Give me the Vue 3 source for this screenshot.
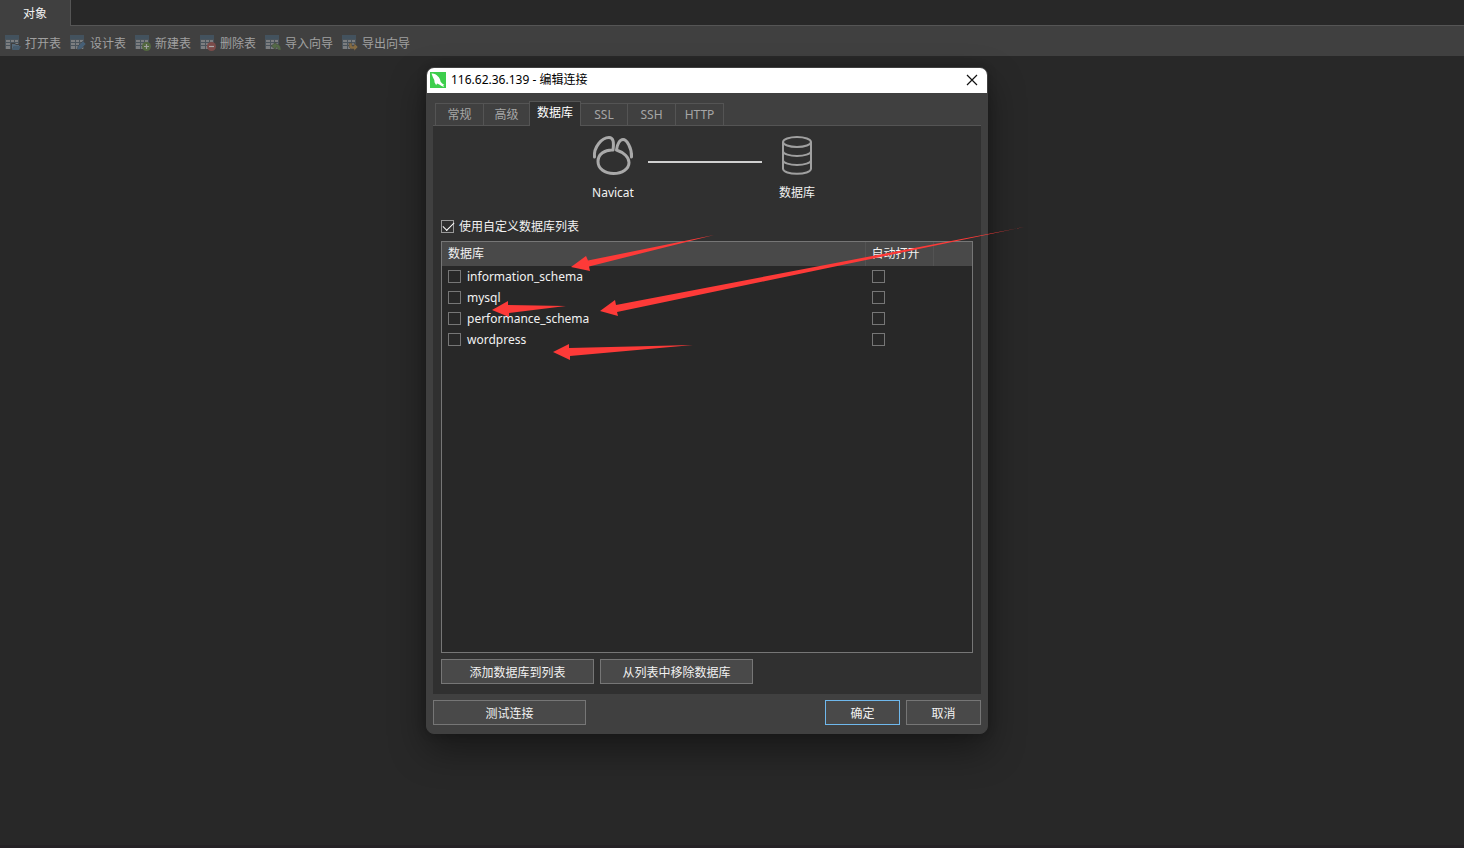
<script setup>
import { ref } from 'vue'

const tools = [
  { label: '打开表', kind: 'open' },
  { label: '设计表', kind: 'design' },
  { label: '新建表', kind: 'add' },
  { label: '删除表', kind: 'remove' },
  { label: '导入向导', kind: 'import' },
  { label: '导出向导', kind: 'export' },
]

const tabs = ['常规', '高级', '数据库', 'SSL', 'SSH', 'HTTP']
const activeTab = ref('数据库')

const useCustom = ref(true)
const databases = ref([
  { name: 'information_schema', checked: false, auto: false },
  { name: 'mysql', checked: false, auto: false },
  { name: 'performance_schema', checked: false, auto: false },
  { name: 'wordpress', checked: false, auto: false },
])
</script>

<template>
  <div class="app">
    <nav class="top-tabs">
      <button class="top-tab" type="button">对象</button>
      <div class="top-fill"></div>
    </nav>
    <div class="toolbar">
      <button v-for="t in tools" :key="t.kind" class="tool" type="button">
        <svg class="tool-icon" width="16" height="16" viewBox="0 0 16 16" aria-hidden="true">
          <rect x="0" y="0" width="14" height="4" fill="#43525e" />
          <rect x="0" y="4" width="14" height="10" fill="#4a545c" />
          <g fill="#7c7e80">
            <rect x="1" y="5" width="4" height="2" /><rect x="6" y="5" width="3" height="2" /><rect x="10" y="5" width="3" height="2" />
            <rect x="1" y="8" width="4" height="2" /><rect x="6" y="8" width="3" height="2" /><rect x="10" y="8" width="3" height="2" />
            <rect x="1" y="11" width="4" height="3" /><rect x="6" y="11" width="3" height="3" /><rect x="10" y="11" width="3" height="3" />
          </g>
          <g v-if="t.kind === 'open'">
            <path d="M6 8h4l1 1h4v7H6z" fill="#404040" />
            <path d="M7 9h3l1 1h3v1H9l-2 4z" fill="#55697a" />
            <path d="M9 11h7l-2 4H7z" fill="#465b6c" />
          </g>
          <g v-else-if="t.kind === 'design'">
            <path d="M7 15l1-4 5-5 3 3-5 5z" fill="#465f76" stroke="#404040" stroke-width="0.500" />
          </g>
          <g v-else-if="t.kind === 'add'">
            <circle cx="11.500" cy="11.500" r="4.500" fill="#53683f" />
            <path d="M9 11.500h5M11.500 9v5" stroke="#a0a0a0" stroke-width="1.200" />
          </g>
          <g v-else-if="t.kind === 'remove'">
            <circle cx="11.500" cy="11.500" r="4.500" fill="#7b4b49" />
            <path d="M9 11.500h5" stroke="#aaa" stroke-width="1.200" />
          </g>
          <g v-else-if="t.kind === 'import'">
            <path d="M6 11l5-4v2c3 0 5 2 5 6h-3c0-2-1-3-2-3v3z" fill="#536947" stroke="#404040" stroke-width="0.500" />
          </g>
          <g v-else>
            <path d="M7 8h3v3h2V8l4 4-4 4v-2H9l-2-2z" fill="#846b43" stroke="#404040" stroke-width="0.500" />
          </g>
        </svg>
        <span>{{ t.label }}</span>
      </button>
    </div>

    <section class="dialog" role="dialog" aria-labelledby="dialog-title">
      <header class="titlebar">
        <svg width="16" height="16" viewBox="0 0 16 16" aria-hidden="true">
          <rect width="16" height="16" fill="#3dce4c" />
          <path d="M1.500 1.500C4 1.300 6.500 2.500 8 4.500c1.200 1 2.200 2.500 2.500 5 .8 1.500 2.500 2.500 4 3.500l-1.500.3 1.300 1.500c-2-.5-3.500-1-5-2.300L7 11.500l-.8 1.800-1.700-3C4.800 8 3.500 7 3 5.500z" fill="#fff" />
        </svg>
        <h1 id="dialog-title">116.62.36.139 - 编辑连接</h1>
        <button class="close" type="button" aria-label="关闭">
          <svg width="12" height="12" viewBox="0 0 12 12"><path d="M1 1l10 10M11 1L1 11" stroke="#111" stroke-width="1.200" fill="none" /></svg>
        </button>
      </header>

      <div class="body">
        <div class="tabs" role="tablist">
          <button
            v-for="tab in tabs"
            :key="tab"
            type="button"
            role="tab"
            class="tab"
            :class="{ active: tab === activeTab }"
            :aria-selected="tab === activeTab"
            @click="activeTab = tab"
          >{{ tab }}</button>
        </div>

        <div class="panel">
          <div class="route">
            <figure>
              <svg width="42" height="40" viewBox="0 0 42 40" fill="none" stroke="#a9a9a9" stroke-width="3" stroke-linecap="round" stroke-linejoin="round" aria-hidden="true">
                <path d="M2.500 22C1.500 12 10 2.500 17 2.500c4.500 0 5 5 4 12.500-8-.5-15 4-15 11.500C6 34 13 38.500 21.500 38.500S37 34 37 27.500c0-5-5-10-12.500-12.500C25 9 28 4.500 31 4.500c3.500 0 9 8 8.500 17.500" />
              </svg>
              <figcaption>Navicat</figcaption>
            </figure>
            <div class="wire"></div>
            <figure>
              <svg width="42" height="40" viewBox="0 0 42 40" fill="none" stroke="#a0a0a0" stroke-width="2" aria-hidden="true">
                <ellipse cx="21" cy="7" rx="14" ry="5" />
                <path d="M7 7v26.500c0 7 28 7 28 0V7M7 16c0 6.500 28 6.500 28 0M7 25c0 6.500 28 6.500 28 0" />
              </svg>
              <figcaption>数据库</figcaption>
            </figure>
          </div>

          <label class="custom">
            <input v-model="useCustom" type="checkbox" />
            <span>使用自定义数据库列表</span>
          </label>

          <div class="list">
            <table>
              <colgroup><col /><col class="c-auto" /><col class="c-rest" /></colgroup>
              <thead>
                <tr><th>数据库</th><th>自动打开</th><td></td></tr>
              </thead>
              <tbody>
                <tr v-for="db in databases" :key="db.name">
                  <td>
                    <label class="db">
                      <input v-model="db.checked" type="checkbox" />
                      <span>{{ db.name }}</span>
                    </label>
                  </td>
                  <td class="auto"><div class="db"><input v-model="db.auto" type="checkbox" :aria-label="'自动打开 ' + db.name" /></div></td>
                  <td></td>
                </tr>
              </tbody>
            </table>
          </div>

          <div class="actions">
            <button class="btn wide" type="button">添加数据库到列表</button>
            <button class="btn wide" type="button">从列表中移除数据库</button>
          </div>
        </div>

        <footer class="actions">
          <button class="btn wide" type="button">测试连接</button>
          <span class="spacer"></span>
          <button class="btn primary" type="button">确定</button>
          <button class="btn" type="button">取消</button>
        </footer>
      </div>

      <svg class="marks" width="562" height="667" viewBox="426 67 562 667" fill="#fd3a38" aria-hidden="true">
        <path d="M571 267l15-11 2 4.500L714 235 589 266.500l1 4.500z" />
        <path d="M492 310l16-9v4l58 1-57 7v4z" />
        <path d="M600 311l15-11 1 5L1024 227 617 312l1 4z" />
        <path d="M553 352l16-8v4l124-3-123 11v4z" />
      </svg>
    </section>
  </div>
</template>

<style>
body {
  background: #282828;
}
</style>

<style scoped>
* {
  box-sizing: border-box;
}
.app {
  position: relative;
  min-height: 100vh;
  background: #282828;
  border-bottom: 3px solid #252225;
  color: #f2f2f2;
  font: 12px/16px "Noto Sans", "Noto Sans CJK SC", sans-serif;
  overflow: hidden;
}
button {
  font: inherit;
  color: inherit;
  padding: 0;
  margin: 0;
  border: 0;
  background: none;
}
.top-tabs {
  display: flex;
  height: 26px;
}
.top-tab {
  width: 70px;
  padding-top: 1px;
  background: #404040;
}
.top-fill {
  flex: 1;
  border-left: 1px solid #555;
  border-bottom: 1px solid #555;
}
.toolbar {
  display: flex;
  align-items: center;
  gap: 9px;
  height: 30px;
  padding: 4px 5px 0;
  background: #404040;
}
.tool {
  display: flex;
  align-items: center;
  gap: 4px;
  color: #a0a0a0;
}
.tool span {
  padding-top: 2px;
}
.dialog {
  position: absolute;
  left: 426px;
  top: 67px;
  width: 562px;
  border: 1px solid #404040;
  border-radius: 8px;
  background: #404040;
  box-shadow: 0 16px 36px rgba(0, 0, 0, 0.4), 0 0 10px rgba(0, 0, 0, 0.2);
}
.titlebar {
  display: flex;
  align-items: center;
  height: 25px;
  padding: 0 9px 1px 3px;
  gap: 5px;
  background: #fff;
  color: #000;
  border-radius: 7px 7px 0 0;
}
h1 {
  flex: 1;
  margin: 0;
  font: inherit;
}
.close {
  display: flex;
}
.body {
  padding: 8px 6px;
}
.tabs {
  display: flex;
  align-items: flex-end;
  padding-left: 2px;
  border-bottom: 1px solid #545454;
}
.tab {
  width: 48px;
  height: 22px;
  border: 1px solid #545454;
  border-width: 1px 1px 0 0;
  color: #a6a6a6;
}
.tab:first-child {
  width: 49px;
  border-left-width: 1px;
}
.tab:nth-child(2) {
  width: 45px;
  border-right: 0;
}
.tab:nth-child(4) {
  width: 47px;
}
.tab.active {
  width: 52px;
  height: 25px;
  margin-bottom: -1px;
  padding-bottom: 3px;
  border-left-width: 1px;
  background: #303030;
  color: #fff;
}
.panel {
  padding: 9px 8px 10px;
  background: #303030;
}
.route {
  display: flex;
  justify-content: center;
  gap: 10px;
  padding-right: 4px;
}
figure {
  display: flex;
  flex-direction: column;
  align-items: center;
  gap: 10px;
  width: 50px;
  margin: 0;
}
.wire {
  width: 114px;
  height: 2px;
  margin-top: 26px;
  background: #d0d0d0;
}
input {
  appearance: none;
  flex: none;
  display: grid;
  align-content: start;
  justify-content: start;
  width: 13px;
  height: 13px;
  margin: 0;
  border: 1px solid #767676;
}
input:checked::after {
  content: "";
  width: 10px;
  height: 5px;
  margin: 1px 0 0 1px;
  border: solid #fff;
  border-width: 0 0 1px 1px;
  transform: rotate(-45deg);
}
.custom {
  display: flex;
  align-items: flex-start;
  gap: 5px;
  margin: 18px 0 6px;
}
.custom input {
  margin-top: 1px;
  border-color: #999;
}
.list {
  height: 412px;
  border: 1px solid #767676;
  background: #282828;
}
table {
  width: 100%;
  table-layout: fixed;
  border-collapse: collapse;
}
.c-auto {
  width: 68px;
}
.c-rest {
  width: 39px;
}
th,
td {
  height: 21px;
  padding: 0 6px;
  text-align: left;
  font-weight: normal;
}
td.auto {
  padding-left: 7px;
}
thead th,
thead td {
  height: 24px;
  background: #494949;
}
thead th {
  border-right: 1px solid #535353;
}
.db {
  display: flex;
  align-items: center;
  gap: 6px;
}
.actions {
  display: flex;
  gap: 6px;
  padding-top: 6px;
}
.btn {
  width: 75px;
  height: 25px;
  padding-top: 2px;
  border: 1px solid #767676;
  background: #494949;
}
.wide {
  width: 153px;
}
.primary {
  border-color: #6fb8ec;
}
.spacer {
  flex: 1;
}
.marks {
  position: absolute;
  left: -1px;
  top: -1px;
  overflow: visible;
  pointer-events: none;
}
</style>
